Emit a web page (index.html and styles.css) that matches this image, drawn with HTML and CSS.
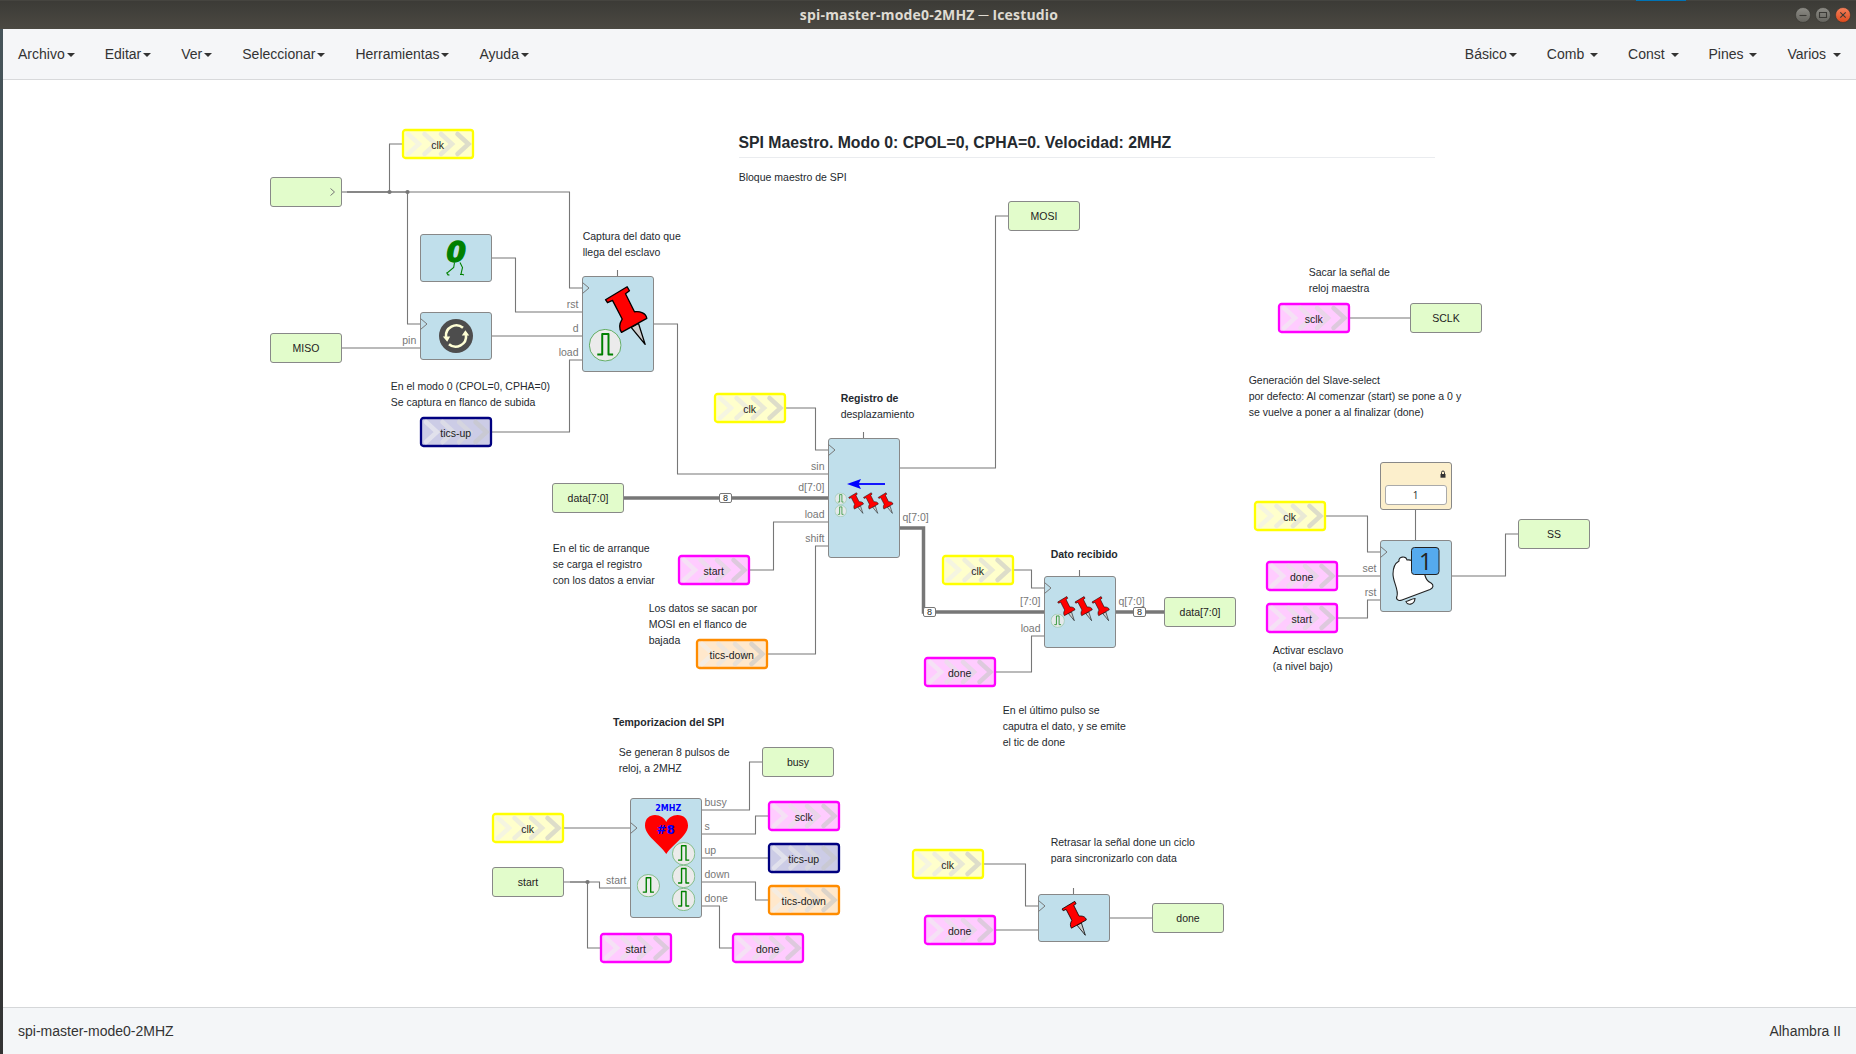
FILE: index.html
```html
<!DOCTYPE html>
<html lang="es">
<head>
<meta charset="utf-8">
<title>spi-master-mode0-2MHZ ─ Icestudio</title>
<link rel="stylesheet" href="styles.css">
</head>
<body>
<div class="window">
  <header class="titlebar">
    <span class="titlebar-accent"></span>
    <h1 class="titlebar-title">spi-master-mode0-2MHZ ─ Icestudio</h1>
    <div class="titlebar-buttons">
      <svg class="winbtn" viewBox="0 0 16 16"><circle class="winbtn-face" cx="8" cy="8" r="7.5"/><path class="winbtn-sign" d="M4.5 8.5h7"/></svg>
      <svg class="winbtn" viewBox="0 0 16 16"><circle class="winbtn-face" cx="8" cy="8" r="7.5"/><path class="winbtn-sign" d="M4.5 5.5h7v5h-7z"/></svg>
      <svg class="winbtn winbtn-close" viewBox="0 0 16 16"><circle class="winbtn-face" cx="8" cy="8" r="7.5"/><path class="winbtn-sign" d="M5.3 5.3l5.4 5.4M10.7 5.3l-5.4 5.4"/></svg>
    </div>
  </header>
  <nav class="menubar">
    <ul class="menu">
      <li>Archivo<i class="caret"></i></li>
      <li>Editar<i class="caret"></i></li>
      <li>Ver<i class="caret"></i></li>
      <li>Seleccionar<i class="caret"></i></li>
      <li>Herramientas<i class="caret"></i></li>
      <li>Ayuda<i class="caret"></i></li>
    </ul>
    <ul class="menu">
      <li>Básico<i class="caret"></i></li>
      <li>Comb <i class="caret"></i></li>
      <li>Const <i class="caret"></i></li>
      <li>Pines <i class="caret"></i></li>
      <li>Varios <i class="caret caret-last"></i></li>
    </ul>
  </nav>
  <main class="canvas">
    <svg class="diagram" viewBox="3 80 1853 927">
      <defs>
        <g id="chevrons" class="chevrons">
          <path class="chev1" d="M6 5L17 15L6 25"/>
          <path class="chev2" d="M22.5 5L33.5 15L22.5 25"/>
          <path class="chev3" d="M39 5L50 15L39 25"/>
          <path class="chev4" d="M55.5 5L66.5 15L55.5 25"/>
        </g>
        <g id="tag"><rect x="1" y="1" width="70" height="28" rx="2.5"/><use href="#chevrons"/></g>
        <rect id="port" class="port" x=".5" y=".5" width="71" height="29" rx="2.5"/>
        <path id="clock" class="clockmark" d="M.5-5.5L7 0L.5 5.5"/>
        <g id="bus"><rect class="bus-box" x="-6" y="-4.5" width="12" height="9" rx="1.5"/><text class="bus-text" x="0" y="3">8</text></g>
        <symbol id="pin" viewBox="0 0 124 173" overflow="visible">
          <path class="pin-needle" d="M77 122L119 173L99 110Z"/>
          <path class="pin-body" d="M0 39L65 0L72 12L60 21L87 75C104 73 122 79 124 95L48 137C40 125 42 110 50 97L21 41L6 48Z"/>
        </symbol>
        <symbol id="pulse" viewBox="-50 -50 100 100">
          <circle class="pulse-face" r="48"/>
          <path class="pulse-line" d="M-24 28H-9V-34H10V28H24"/>
        </symbol>
      </defs>

      <!-- wires -->
      <g class="wires">
        <path d="M342 192h5"/>
        <path d="M347 192H389.5V144H402"/>
        <path d="M347 192H407.5V324H420"/>
        <path d="M347 192H569.5V288H582"/>
        <path d="M492 258H515.5V312H582"/>
        <path d="M492 336H582"/>
        <path d="M342 348H420"/>
        <path d="M492 432H569.5V360H582"/>
        <path d="M654 324H677.5V474H828"/>
        <path d="M617.5 270v6M863.5 432v6M1079.5 570v6M1073.5 888v6"/>
        <path d="M786 408H815.5V450H828"/>
        <path d="M750 570H773.5V522H828"/>
        <path d="M768 654H815.5V546H828"/>
        <path d="M900 468H995.5V216H1008"/>
        <path d="M1014 570H1031.5V588H1044"/>
        <path d="M996 672H1031.5V636H1044"/>
        <path d="M564 828H630"/>
        <path d="M564 882H599.5V888H630"/>
        <path d="M570 882H587.5V948H600"/>
        <path d="M702 810H749.5V762H762"/>
        <path d="M702 834H755.5V816H768"/>
        <path d="M702 858H768"/>
        <path d="M702 882H755.5V900H768"/>
        <path d="M702 906H719.5V948H732"/>
        <path d="M1350 318H1410"/>
        <path d="M1415.5 510V540"/>
        <path d="M1326 516H1367.5V552H1380"/>
        <path d="M1338 576H1380"/>
        <path d="M1338 618H1367.5V600H1380"/>
        <path d="M1452 576H1505.5V534H1518"/>
        <path d="M984 864H1025.5V906H1038"/>
        <path d="M996 930H1038"/>
        <path d="M1110 918H1152"/>
        <path class="wire-bus" d="M624 498H828"/>
        <path class="wire-bus" d="M900 528H923.5V612H1044"/>
        <path class="wire-bus" d="M1116 612H1164"/>
      </g>
      <g class="joints"><circle cx="389.5" cy="192" r="2.1"/><circle cx="407.5" cy="192" r="2.1"/><circle cx="587.5" cy="882" r="2.1"/></g>
      <use href="#bus" x="725.5" y="498"/><use href="#bus" x="929.5" y="612"/><use href="#bus" x="1139.5" y="612"/>

      <!-- input and output ports -->
      <g class="io">
        <g transform="translate(270 177)"><use href="#port"/><path class="clockmark" d="M60.5 11.5L64.5 15L60.5 18.5"/></g>
        <g transform="translate(270 333)"><use href="#port"/><text x="36" y="19">MISO</text></g>
        <g transform="translate(1008 201)"><use href="#port"/><text x="36" y="19">MOSI</text></g>
        <g transform="translate(552 483)"><use href="#port"/><text x="36" y="19">data[7:0]</text></g>
        <g transform="translate(1164 597)"><use href="#port"/><text x="36" y="19">data[7:0]</text></g>
        <g transform="translate(762 747)"><use href="#port"/><text x="36" y="19">busy</text></g>
        <g transform="translate(492 867)"><use href="#port"/><text x="36" y="19">start</text></g>
        <g transform="translate(1410 303)"><use href="#port"/><text x="36" y="19">SCLK</text></g>
        <g transform="translate(1518 519)"><use href="#port"/><text x="36" y="19">SS</text></g>
        <g transform="translate(1152 903)"><use href="#port"/><text x="36" y="19">done</text></g>
      </g>

      <!-- labels -->
      <g class="tags">
        <g class="tag-yellow" transform="translate(402 129)"><use href="#tag"/><text x="35.700" y="20">clk</text></g>
        <g class="tag-yellow" transform="translate(714 393)"><use href="#tag"/><text x="35.700" y="20">clk</text></g>
        <g class="tag-yellow" transform="translate(942 555)"><use href="#tag"/><text x="35.700" y="20">clk</text></g>
        <g class="tag-yellow" transform="translate(492 813)"><use href="#tag"/><text x="35.700" y="20">clk</text></g>
        <g class="tag-yellow" transform="translate(1254 501)"><use href="#tag"/><text x="35.700" y="20">clk</text></g>
        <g class="tag-yellow" transform="translate(912 849)"><use href="#tag"/><text x="35.700" y="20">clk</text></g>
        <g class="tag-navy" transform="translate(420 417)"><use href="#tag"/><text x="35.700" y="20">tics-up</text></g>
        <g class="tag-navy" transform="translate(768 843)"><use href="#tag"/><text x="35.700" y="20">tics-up</text></g>
        <g class="tag-orange" transform="translate(696 639)"><use href="#tag"/><text x="35.700" y="20">tics-down</text></g>
        <g class="tag-orange" transform="translate(768 885)"><use href="#tag"/><text x="35.700" y="20">tics-down</text></g>
        <g class="tag-pink" transform="translate(678 555)"><use href="#tag"/><text x="35.700" y="20">start</text></g>
        <g class="tag-pink" transform="translate(924 657)"><use href="#tag"/><text x="35.700" y="20">done</text></g>
        <g class="tag-pink" transform="translate(768 801)"><use href="#tag"/><text x="35.700" y="20">sclk</text></g>
        <g class="tag-pink" transform="translate(600 933)"><use href="#tag"/><text x="35.700" y="20">start</text></g>
        <g class="tag-pink" transform="translate(732 933)"><use href="#tag"/><text x="35.700" y="20">done</text></g>
        <g class="tag-pink" transform="translate(1278 303)"><use href="#tag"/><text x="35.700" y="20">sclk</text></g>
        <g class="tag-pink" transform="translate(1266 561)"><use href="#tag"/><text x="35.700" y="20">done</text></g>
        <g class="tag-pink" transform="translate(1266 603)"><use href="#tag"/><text x="35.700" y="20">start</text></g>
        <g class="tag-pink" transform="translate(924 915)"><use href="#tag"/><text x="35.700" y="20">done</text></g>
      </g>

      <!-- constant zero -->
      <g transform="translate(420 234)">
        <rect class="block" x=".5" y=".5" width="71" height="47" rx="2.5"/>
        <text class="zero" x="36.200" y="27.500">0</text>
        <path class="legs" d="M34.500 28.500L33.700 33.500L27 39L28.500 41M40 28.500L42.500 33.500L41 40L44 41M26.500 38.500l1.500 2.500h1.500M40 40.500h3.500"/>
      </g>
      <!-- pin synchroniser -->
      <g transform="translate(420 312)">
        <rect class="block" x=".5" y=".5" width="71" height="47" rx="2.5"/>
        <use href="#clock" x="0" y="12"/>
        <circle class="sync-disc" cx="36" cy="24" r="17"/>
        <path class="sync-arc" d="M43 15.800A10.400 10.400 0 0 0 26 25M29 32.200A10.400 10.400 0 0 0 46 23"/>
        <path class="sync-head" d="M22.800 24.500h7.400l-3 5.200zM41.800 23.500h7.400l-3.800-5.200z"/>
      </g>
      <!-- capture flip-flop -->
      <g transform="translate(582 276)">
        <rect class="block" x=".5" y=".5" width="71" height="95" rx="2.5"/>
        <use href="#clock" x="0" y="12"/>
        <use href="#pin" x="23.500" y="10.700" width="41.300" height="57.700"/>
        <use href="#pulse" x="6.700" y="52.700" width="33" height="33"/>
      </g>
      <!-- shift register -->
      <g transform="translate(828 438)">
        <rect class="block" x=".5" y=".5" width="71" height="119" rx="2.5"/>
        <use href="#clock" x="0" y="12"/>
        <path class="arrow-line" d="M57 46H29"/><path class="arrow-head" d="M19 46L33 41L30.500 46L33 51Z"/>
        <use href="#pin" x="20.700" y="54.700" width="14.800" height="20.700"/>
        <use href="#pin" x="35.500" y="54.700" width="14.800" height="20.700"/>
        <use href="#pin" x="50.200" y="54.700" width="14.800" height="20.700"/>
        <use href="#pulse" class="small" x="6.700" y="54.700" width="12" height="12"/>
        <use href="#pulse" class="small" x="6.700" y="67" width="12" height="12"/>
      </g>
      <!-- received data register -->
      <g transform="translate(1044 576)">
        <rect class="block" x=".5" y=".5" width="71" height="71" rx="2.5"/>
        <use href="#clock" x="0" y="12"/>
        <use href="#pin" x="13.700" y="20.500" width="17.300" height="24.200"/>
        <use href="#pin" x="31" y="20.500" width="17.300" height="24.200"/>
        <use href="#pin" x="48" y="20.500" width="17.300" height="24.200"/>
        <use href="#pulse" class="small" x="6.700" y="37.700" width="14" height="14"/>
      </g>
      <!-- 2MHZ heart beat -->
      <g transform="translate(630 798)">
        <rect class="block" x=".5" y=".5" width="71" height="119" rx="2.5"/>
        <use href="#clock" x="0" y="30"/>
        <path class="heart" d="M36.300 56C29 45 15 38 15 27.500C15 20.500 19.500 17 25 17C30 17 34.500 20 36.300 24C38 20 42.500 17 47.500 17C53.500 17 58 21 58 27.500C58 38 43.500 45 36.300 56Z"/>
        <text class="mhz" x="38.200" y="12.600">2MHZ</text>
        <text class="count" x="35.700" y="35.500">#8</text>
        <use href="#pulse" x="42" y="44" width="23.300" height="23.300"/>
        <use href="#pulse" x="42" y="66.800" width="23.300" height="23.300"/>
        <use href="#pulse" x="42" y="89.800" width="23.300" height="23.300"/>
        <use href="#pulse" x="6.700" y="76" width="23.300" height="23.300"/>
      </g>
      <!-- delay flip-flop -->
      <g transform="translate(1038 894)">
        <rect class="block" x=".5" y=".5" width="71" height="47" rx="2.5"/>
        <use href="#clock" x="0" y="12"/>
        <use href="#pin" x="24" y="7.300" width="24.300" height="34"/>
      </g>
      <!-- constant parameter -->
      <g transform="translate(1380 462)">
        <rect class="const" x=".5" y=".5" width="71" height="47" rx="2.5"/>
        <rect class="const-field" x="5.500" y="23.500" width="61" height="19" rx="2.5"/>
        <text class="const-value" x="35.500" y="37">1</text>
        <path class="lock" d="M60.500 12h5v3.700h-5z"/><path class="lock-bow" d="M61.500 12v-1.500a1.500 1.500 0 0 1 3 0v1.500"/>
      </g>
      <!-- slave-select latch -->
      <g transform="translate(1380 540)">
        <rect class="block" x=".5" y=".5" width="71" height="71" rx="2.5"/>
        <use href="#clock" x="0" y="12"/>
        <path class="bell" d="M19 21C18 16.500 26 15.500 27 20C34 19 42 25 44.500 34C46 39 47 41 51 43C54 45 53.500 48 50 49.500L22 60C18 61.500 15.500 59 17 56C19 50 13 42 13 34C13 28 15.500 23 19 21Z"/>
        <path class="clapper" d="M26 61.500C27 66 34.500 65 35 58.500C32 58.500 29 61 26 61.500Z"/>
        <rect class="badge" x="31.500" y="7.500" width="27.500" height="27" rx="3"/>
        <text class="badge-value" x="45.500" y="29.500">1</text>
      </g>

      <!-- port names -->
      <g class="names names-left">
        <text x="578.500" y="308">rst</text><text x="578.500" y="332">d</text><text x="578.500" y="356">load</text>
        <text x="416.300" y="344">pin</text>
        <text x="824.500" y="470">sin</text><text x="824.500" y="491">d[7:0]</text><text x="824.500" y="518">load</text><text x="824.500" y="542">shift</text>
        <text x="1040.500" y="605">[7:0]</text><text x="1040.500" y="632">load</text>
        <text x="626.500" y="884">start</text>
        <text x="1376.500" y="572">set</text><text x="1376.500" y="596">rst</text>
      </g>
      <g class="names">
        <text x="902.500" y="521">q[7:0]</text><text x="1118.500" y="605">q[7:0]</text>
        <text x="704.500" y="806">busy</text><text x="704.500" y="830">s</text><text x="704.500" y="854">up</text><text x="704.500" y="878">down</text><text x="704.500" y="902">done</text>
      </g>

      <!-- notes -->
      <g class="notes">
        <text class="note-title" x="738.500" y="148">SPI Maestro. Modo 0: CPOL=0, CPHA=0. Velocidad: 2MHZ</text>
        <path class="note-rule" d="M739 157.500H1435"/>
        <text x="738.700" y="181">Bloque maestro de SPI</text>
        <text x="582.700" y="240">Captura del dato que</text><text x="582.700" y="256">llega del esclavo</text>
        <text x="390.700" y="390">En el modo 0 (CPOL=0, CPHA=0)</text><text x="390.700" y="406">Se captura en flanco de subida</text>
        <text class="strong" x="840.700" y="402">Registro de</text><text x="840.700" y="418">desplazamiento</text>
        <text x="552.700" y="552">En el tic de arranque</text><text x="552.700" y="568">se carga el registro</text><text x="552.700" y="584">con los datos a enviar</text>
        <text x="648.700" y="612">Los datos se sacan por</text><text x="648.700" y="628">MOSI en el flanco de</text><text x="648.700" y="644">bajada</text>
        <text class="strong" x="1050.700" y="558">Dato recibido</text>
        <text x="1002.700" y="714">En el último pulso se</text><text x="1002.700" y="730">caputra el dato, y se emite</text><text x="1002.700" y="746">el tic de done</text>
        <text class="strong" x="613" y="726">Temporizacion del SPI</text>
        <text x="618.700" y="756">Se generan 8 pulsos de</text><text x="618.700" y="772">reloj, a 2MHZ</text>
        <text x="1308.700" y="276">Sacar la señal de</text><text x="1308.700" y="292">reloj maestra</text>
        <text x="1248.700" y="384">Generación del Slave-select</text><text x="1248.700" y="400">por defecto: Al comenzar (start) se pone a 0 y</text><text x="1248.700" y="416">se vuelve a poner a al finalizar (done)</text>
        <text x="1272.700" y="654">Activar esclavo</text><text x="1272.700" y="670">(a nivel bajo)</text>
        <text x="1050.700" y="846">Retrasar la señal done un ciclo</text><text x="1050.700" y="862">para sincronizarlo con data</text>
      </g>
    </svg>
  </main>
  <footer class="statusbar"><span>spi-master-mode0-2MHZ</span><span>Alhambra II</span></footer>
</div>
<svg class="palette" width="0" height="0"><defs>
  <linearGradient id="btn-grey" x2="0" y2="1"><stop offset="0" stop-color="#8d8c86"/><stop offset="1" stop-color="#65645e"/></linearGradient>
  <linearGradient id="btn-red" x2="0" y2="1"><stop offset="0" stop-color="#f5815c"/><stop offset="1" stop-color="#de4a1c"/></linearGradient>
</defs></svg>
</body>
</html>
```
FILE: styles.css
```css
* { box-sizing: border-box; }
body { margin: 0; font-family: "Liberation Sans", Arial, sans-serif; font-size: 14px; color: #333; overflow: hidden; }
.window { display: flex; flex-direction: column; width: 1856px; height: 1054px; padding-left: 3px; background: linear-gradient(#46545a, #424c4e 60%, #333) 0 0 / 3px 100% no-repeat #fff; }
.palette { position: absolute; }

.titlebar { position: relative; display: flex; align-items: center; justify-content: center; flex: 0 0 29px; margin-left: -3px; background: linear-gradient(#3b3a36, #4b4942); box-shadow: inset 0 1px #45443f; }
.titlebar-accent { position: absolute; top: 0; left: 1636px; width: 50px; height: 1px; background: #0073b5; }
.titlebar-title { margin: 0 0 0 2px; font: bold 14px/29px "Open Sans", "Noto Sans", sans-serif; letter-spacing: .18px; color: #dfdbd2; }
.titlebar-buttons { position: absolute; right: 5px; top: 7px; display: flex; gap: 4px; }
.winbtn { width: 16px; height: 16px; }
.winbtn-face { fill: url(#btn-grey); stroke: #33322e; stroke-width: .6; }
.winbtn-close .winbtn-face { fill: url(#btn-red); }
.winbtn-sign { fill: none; stroke: #3a3935; stroke-width: 1.1; }

.menubar { display: flex; justify-content: space-between; flex: 0 0 51px; background: #f5f6f8; border-bottom: 1px solid #d8d9db; }
.menu { display: flex; margin: 0; padding: 0; list-style: none; }
.menu li { padding: 0 15px; line-height: 50px; white-space: pre; }
.caret { display: inline-block; margin-left: 2px; vertical-align: middle; border: 4px solid transparent; border-top-color: #333; border-bottom: 0; }
.caret-last { margin-left: 3px; }

.canvas { flex: 0 0 927px; }
.diagram { display: block; width: 1853px; height: 927px; }
.statusbar { display: flex; justify-content: space-between; align-items: center; flex: 1; padding: 0 15px; background: #f4f6f8; border-top: 1px solid #d5d7d9; }

.diagram text { font-size: 10.5px; fill: #24292e; }
.wires path { fill: none; stroke: #777; stroke-width: 1.1; }
.wires .wire-bus { stroke-width: 3.5; }
.joints circle { fill: #777; }
.bus-box { fill: #fff; stroke: #777; }
.diagram .bus-text { font-size: 9px; text-anchor: middle; fill: #222; }
.port { fill: #e2fccb; stroke: #888; }
.block { fill: #c0dfeb; stroke: #888; }
.const { fill: #fcefcc; stroke: #888; }
.const-field { fill: #fff; stroke: #aaa; }
.clockmark { fill: none; stroke: #777; stroke-width: 1; }
.diagram .io text, .diagram .tags text { text-anchor: middle; fill: #222; }

.chevrons { fill: none; stroke-width: 4.5; stroke-linecap: round; opacity: .6; }
.chev1 { stroke: #f0f0f0; }
.chev2 { stroke: #e6e6e6; }
.chev3 { stroke: #dbdbdb; }
.chev4 { stroke: #c8c8c8; }
.tags > g { stroke-width: 2.3; }
.tags text { stroke: none; }
.tag-yellow { fill: #ffffcc; stroke: #ff0; }
.tag-pink { fill: #ffccff; stroke: #f0f; }
.tag-navy { fill: #cccce6; stroke: #000080; }
.tag-orange { fill: #ffe8cc; stroke: #ff8c00; }

.diagram .names text { fill: #777; }
.names-left { text-anchor: end; }
.notes .strong { font-weight: bold; }
.diagram .notes .note-title { font-size: 15.8px; font-weight: bold; }
.note-rule { stroke: #eaecef; }

.pin-body { fill: #f00; stroke: #000; stroke-width: 4; stroke-linejoin: round; }
.pin-needle { fill: #ccc; stroke: #000; stroke-width: 4; stroke-linejoin: round; }
.pulse-face { fill: #ebebeb; stroke: #46a046; stroke-width: 2.5; }
.pulse-line { fill: none; stroke: #008000; stroke-width: 6; stroke-linejoin: round; }
.small { opacity: .85; }
.diagram .zero { font: italic bold 28px "DejaVu Sans", sans-serif; fill: #008000; stroke: #008000; stroke-width: 1.3; text-anchor: middle; }
.legs { fill: none; stroke: #008000; stroke-width: 1.1; }
.sync-disc { fill: #4d4d4d; }
.sync-arc { fill: none; stroke: #ffffd5; stroke-width: 2.6; }
.sync-head { fill: #ffffd5; }
.arrow-line { stroke: #00f; stroke-width: 1.8; }
.arrow-head { fill: #00f; }
.heart { fill: #f00; }
.diagram .mhz { font: bold 8px "DejaVu Sans", sans-serif; fill: #00f; text-anchor: middle; }
.diagram .count { font: bold 12px "DejaVu Sans", sans-serif; fill: #00f; text-anchor: middle; }
.diagram .const-value { font-family: "Open Sans", sans-serif; font-size: 10px; text-anchor: middle; }
.lock { fill: #333; }
.lock-bow { fill: none; stroke: #333; }
.bell, .clapper { fill: #fff; stroke: #222; stroke-width: 1.1; }
.badge { fill: #5ae; stroke: #222; }
.diagram .badge-value { font: 23px "Open Sans", sans-serif; fill: #222; text-anchor: middle; }
```
